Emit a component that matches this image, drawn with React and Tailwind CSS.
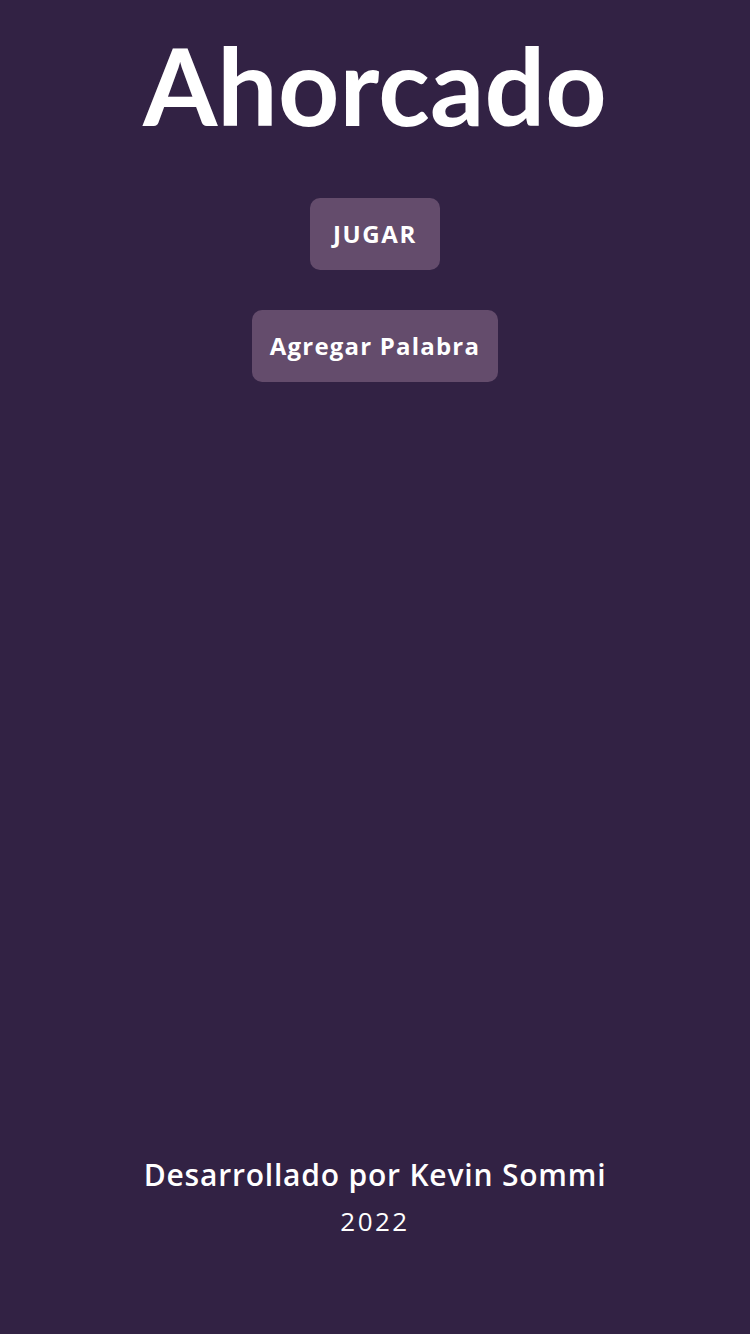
import React from "react";

function App() {
  return (
    <div
      className="min-h-screen w-full bg-[#322244] text-white flex flex-col items-center"
      style={{ fontFamily: "'Open Sans', 'Noto Sans', sans-serif" }}
    >
      <main className="flex-1 flex flex-col items-center">
        <h1 className="mt-[31px] text-[107px] leading-[108px] font-bold tracking-[0.2px] font-['Lato',sans-serif]">
          Ahorcado
        </h1>
        <div className="mt-[59px] flex flex-col items-center gap-[40px]">
          <button className="h-[72px] w-[130px] rounded-[10px] bg-[#644c6c] text-[24px] font-bold tracking-[1.6px]">
            JUGAR
          </button>
          <button className="h-[72px] w-[246px] rounded-[10px] bg-[#644c6c] text-[24px] font-bold tracking-[1.2px]">
            Agregar Palabra
          </button>
        </div>
      </main>
      <footer className="flex flex-col items-center pb-[96px]">
        <p className="text-[30px] leading-[40px] font-semibold tracking-[0.8px]">Desarrollado por Kevin Sommi</p>
        <p className="mt-[9px] text-[26px] leading-[34px] tracking-[2.5px]">2022</p>
      </footer>
    </div>
  );
}

export default App;
